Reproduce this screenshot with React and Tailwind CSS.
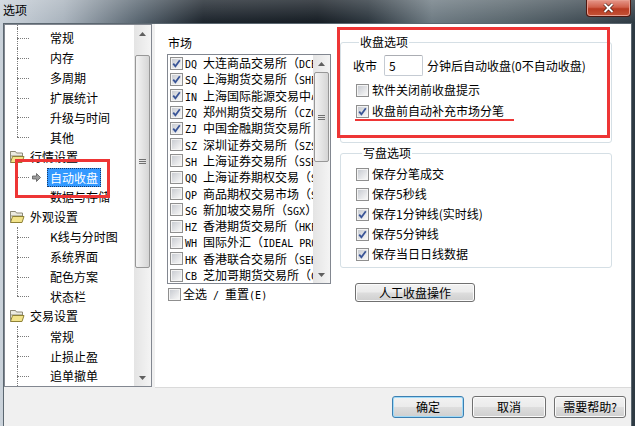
import React from "react";

const cjk = "font-['Noto_Sans_CJK_SC','Noto_Sans',sans-serif]";
const CJK_RE = /([\u3000-\u303f\u4e00-\u9fff\uff00-\uffef]+)/;

const tree = [
    { t: "常规" },
    { t: "内存" },
    { t: "多周期" },
    { t: "扩展统计" },
    { t: "升级与时间" },
    { t: "其他", last: true },
    { t: "行情设置", group: true },
    { t: "自动收盘", sel: true },
    { t: "数据与存储", last: true },
    { t: "外观设置", group: true },
    { t: "K线与分时图" },
    { t: "系统界面" },
    { t: "配色方案" },
    { t: "状态栏", last: true },
    { t: "交易设置", group: true },
    { t: "常规" },
    { t: "止损止盈" },
    { t: "追单撤单" },
];

const markets = [
    ["DQ", "大连商品交易所（DCE）", true],
    ["SQ", "上海期货交易所（SHFE）", true],
    ["IN", "上海国际能源交易中心（INE）", true],
    ["ZQ", "郑州期货交易所（CZCE）", true],
    ["ZJ", "中国金融期货交易所（CFFEX）", true],
    ["SZ", "深圳证券交易所（SZSE）", false],
    ["SH", "上海证券交易所（SSE）", false],
    ["QQ", "上海证券期权交易（SSE）", false],
    ["QP", "商品期权交易市场（SHFE）", false],
    ["SG", "新加坡交易所（SGX）", false],
    ["HZ", "香港期货交易所（HKFE）", false],
    ["WH", "国际外汇（IDEAL PRO）", false],
    ["HK", "香港联合交易所（SEHK）", false],
    ["CB", "芝加哥期货交易所（CBOT）", false],
];

const Mixed = ({ text }) =>
    text
        .split(CJK_RE)
        .filter(Boolean)
        .map((s, i) =>
            CJK_RE.test(s) ? (
                <span key={i} className="text-[12px] font-['Noto_Sans_CJK_SC',sans-serif]">
                    {s}
                </span>
            ) : (
                <span key={i} className="text-[10px] font-['DejaVu_Sans_Mono',monospace] whitespace-pre">
                    {s}
                </span>
            )
        );

const Check = ({ checked }) => (
    <span className="w-[13px] h-[13px] border border-[#8f8f8f] bg-[#f4f4f4] p-[1px] shrink-0 flex">
        <span className="flex-1 bg-linear-to-br from-[#c9ccd2] to-[#f7f7f7] flex items-center justify-center">
            {checked && (
                <svg width="9" height="9" viewBox="0 0 9 9">
                    <path d="M1.2 4.6 L3.4 7.2 L7.8 1.2" fill="none" stroke="#3a5597" strokeWidth="1.8" />
                </svg>
            )}
        </span>
    </span>
);

const Folder = () => (
    <svg width="16" height="14" viewBox="0 0 16 14" className="shrink-0">
        <path d="M1.5 1.5h5l1 1.5h6v3h-12z" fill="#ecebe0" stroke="#8d8a78" />
        <path d="M1.5 12.5 L3.5 6.5 H15 L13 12.5 Z" fill="#f2e38a" stroke="#8f8236" />
        <path d="M1.5 1.5 V12.5" stroke="#8d8a78" />
    </svg>
);

const Scrollbar = ({ thumb }) => (
    <div className="w-[17px] h-full bg-linear-to-r from-[#e4e4e4] to-[#f4f4f4] flex flex-col shrink-0">
        <div className="h-[17px] flex items-center justify-center shrink-0">
            <svg width="7" height="4" viewBox="0 0 7 4">
                <path d="M0 4 L3.5 0 L7 4Z" fill="#5f5f5f" />
            </svg>
        </div>
        <div className="flex-1 flex flex-col px-[1px]">
            <div className={`${thumb} rounded-[2px] border border-[#979797] bg-linear-to-r from-[#f4f4f4] to-[#d5d5d5] flex items-center justify-center`}>
                <div className="w-[7px] flex flex-col gap-[1px]">
                    <div className="h-[1px] bg-[#707070]" />
                    <div className="h-[1px] bg-[#707070]" />
                    <div className="h-[1px] bg-[#707070]" />
                </div>
            </div>
        </div>
        <div className="h-[17px] flex items-center justify-center shrink-0">
            <svg width="7" height="4" viewBox="0 0 7 4">
                <path d="M0 0 L3.5 4 L7 0Z" fill="#5f5f5f" />
            </svg>
        </div>
    </div>
);

const Btn = ({ children, className, def }) => (
    <div
        className={`${className} rounded-[3px] border ${
            def ? "border-[#3c7fb1] shadow-[inset_0_0_0_1px_#9fdaf8]" : "border-[#707070] shadow-[inset_0_0_0_1px_#fbfbfb]"
        } bg-[linear-gradient(#f2f2f2_0%,#ebebeb_48%,#dddddd_52%,#cfcfcf_100%)] flex items-center justify-center text-[12px] ${cjk}`}>
        {children}
    </div>
);

const TreeRow = ({ item }) => {
    if (item.group) {
        return (
            <div className="h-[20px] flex items-center pl-[4px] gap-[5px]">
                <Folder />
                <span className="text-[12px] leading-[20px]">{item.t}</span>
            </div>
        );
    }
    return (
        <div className="h-[20px] flex items-center">
            <div className="w-[12px] shrink-0" />
            <div className="w-[12px] h-full flex flex-col shrink-0">
                <div className="h-1/2 border-l border-dotted border-[#7a7a7a]" />
                <div className={`h-1/2 border-t border-dotted border-[#7a7a7a] ${item.last ? "" : "border-l"}`} />
            </div>
            <div className="w-[18px] h-full flex items-center shrink-0 pl-[3px]">
                {item.sel && (
                    <svg width="9" height="9" viewBox="0 0 9 9">
                        <path d="M0.5 3 H4.5 V0.5 L8.5 4.5 L4.5 8.5 V6 H0.5 Z" fill="#9c9c9c" stroke="#5a5a5a" strokeWidth="0.8" />
                    </svg>
                )}
            </div>
            <span
                className={`px-[2px] h-[19px] leading-[17px] text-[12px] border ${
                    item.sel ? "bg-[#3399ff] text-white border-dotted border-[#173a6a]" : "border-transparent"
                }`}>
                {item.t}
            </span>
        </div>
    );
};

export default function App() {
    return (
        <div className={`w-[635px] h-[426px] overflow-hidden relative flex flex-col text-black ${cjk} bg-[linear-gradient(90deg,#cbd3db_0%,#a9b3bd_10%,#56636e_22%,#1c242c_32%,#151c23_50%,#2b353d_58%,#6c7981_68%,#58656c_80%,#2e3a43_100%)]`}>
            {/* title bar */}
            <div className="h-[23px] shrink-0 flex items-start justify-between bg-linear-to-b from-[#ffffff33] to-transparent">
                <span className="text-[12px] leading-[17px] pl-[3px] pt-[1px]">选项</span>
                <div className="w-[45px] h-[17px] mr-[4px] rounded-b-[4px] border border-t-0 border-[#4e1810] bg-[linear-gradient(#e6978a_0%,#d0604b_45%,#b93a22_55%,#c45437_100%)] flex items-center justify-center shadow-[inset_0_0_0_1px_#e89d8f]">
                    <svg width="11" height="10" viewBox="0 0 11 10">
                        <path d="M1.5 1 L9.5 9 M9.5 1 L1.5 9" stroke="#3a1008" strokeWidth="3.2" />
                        <path d="M1.5 1 L9.5 9 M9.5 1 L1.5 9" stroke="#ffffff" strokeWidth="2" />
                    </svg>
                </div>
            </div>

            {/* body */}
            <div className="flex-1 mx-[3px] border-t border-x border-[#5b6770] bg-[#f0f0f0] flex flex-col">
                <div className="h-[364px] flex gap-[3px] shrink-0">
                    {/* tree */}
                    <div className="w-[148px] h-[363px] border border-[#828790] bg-white flex">
                        <div className="flex-1 flex flex-col overflow-hidden">
                            <div className="h-[3px] ml-[12px] border-l border-dotted border-[#7a7a7a] shrink-0" />
                            {tree.map((item, i) => (
                                <TreeRow key={i} item={item} />
                            ))}
                        </div>
                        <Scrollbar thumb="mt-[13px] h-[213px]" />
                    </div>

                    {/* right panel */}
                    <div className="flex-1 bg-white border-b border-[#dadada] flex gap-[9px] pl-[12px]">
                        <div className="w-[164px] flex flex-col pt-[12px]">
                            <div className="text-[12px] leading-[14px] pl-[1px] mb-[4px]">市场</div>
                            <div className="h-[230px] border border-[#828790] flex">
                                <div className="flex-1 flex flex-col pl-[2px] overflow-hidden">
                                    {markets.map(([code, name, on]) => (
                                        <div key={code} className="h-[16.3px] flex items-center gap-[2px] whitespace-nowrap">
                                            <Check checked={on} />
                                            <span className="leading-[16px]">
                                                <Mixed text={`${code} ${name}`} />
                                            </span>
                                        </div>
                                    ))}
                                </div>
                                <Scrollbar thumb="mt-0 h-[90px]" />
                            </div>
                            <div className="h-[16px] mt-[2px] flex items-center gap-[2px] pl-[1px] whitespace-nowrap">
                                <Check checked={false} />
                                <span className="leading-[16px]">
                                    <Mixed text="全选 / 重置(E)" />
                                </span>
                            </div>
                        </div>

                        <div className="w-[272px] flex flex-col pt-[10px]">
                            <fieldset className="border border-[#d5dfe5] rounded-[3px] pl-[12px] pb-[21px]">
                                <legend className="ml-[6px] px-[1px] text-[12px] leading-[16px]">收盘选项</legend>
                                <div className="mt-[5px] h-[21px] flex items-center text-[12px]">
                                    <span>收市</span>
                                    <div className="ml-[7px] w-[39px] h-[21px] border border-[#c5cbd3] border-t-[#abadb3] rounded-[2px] pl-[4px] leading-[19px]">5</div>
                                    <span className="ml-[4px]">分钟后自动收盘(0不自动收盘)</span>
                                </div>
                                <div className="mt-[4px] h-[20px] flex items-center gap-[3px] pl-[3px] text-[12px]">
                                    <Check checked={false} />
                                    <span>软件关闭前收盘提示</span>
                                </div>
                                <div className="mt-[1px] h-[20px] flex items-center gap-[3px] pl-[3px] text-[12px]">
                                    <Check checked={true} />
                                    <span>收盘前自动补充市场分笔</span>
                                </div>
                            </fieldset>

                            <fieldset className="mt-[2px] border border-[#d5dfe5] rounded-[3px] pl-[15px] pb-[3px]">
                                <legend className="ml-[6px] px-[1px] text-[12px] leading-[16px]">写盘选项</legend>
                                <div className="mt-[3px] flex flex-col">
                                    {[
                                        ["保存分笔成交", false],
                                        ["保存5秒线", false],
                                        ["保存1分钟线(实时线)", true],
                                        ["保存5分钟线", true],
                                        ["保存当日日线数据", true],
                                    ].map(([t, on]) => (
                                        <div key={t} className="h-[20px] flex items-center gap-[3px] text-[12px]">
                                            <Check checked={on} />
                                            <span>{t}</span>
                                        </div>
                                    ))}
                                </div>
                            </fieldset>

                            <Btn className="mt-[15px] ml-[15px] w-[120px] h-[19px]">人工收盘操作</Btn>
                        </div>
                    </div>
                </div>

                {/* bottom buttons */}
                <div className="flex justify-end gap-[8px] pt-[8px] pr-[5px]">
                    <Btn className="w-[72px] h-[22px]" def>
                        确定
                    </Btn>
                    <Btn className="w-[74px] h-[22px]">取消</Btn>
                    <Btn className="w-[72px] h-[22px]">需要帮助?</Btn>
                </div>
            </div>

            {/* red annotations */}
            <div className="absolute left-[337px] top-[27px] w-[273px] h-[111px] border-[3px] border-[#ee3535]" />
            <div className="absolute left-[355px] top-[119px] w-[159px] h-[2px] bg-[#ee3535]" />
            <div className="absolute left-[15px] top-[159px] w-[95px] h-[39px] border-[3px] border-[#ee3535]" />
        </div>
    );
}
